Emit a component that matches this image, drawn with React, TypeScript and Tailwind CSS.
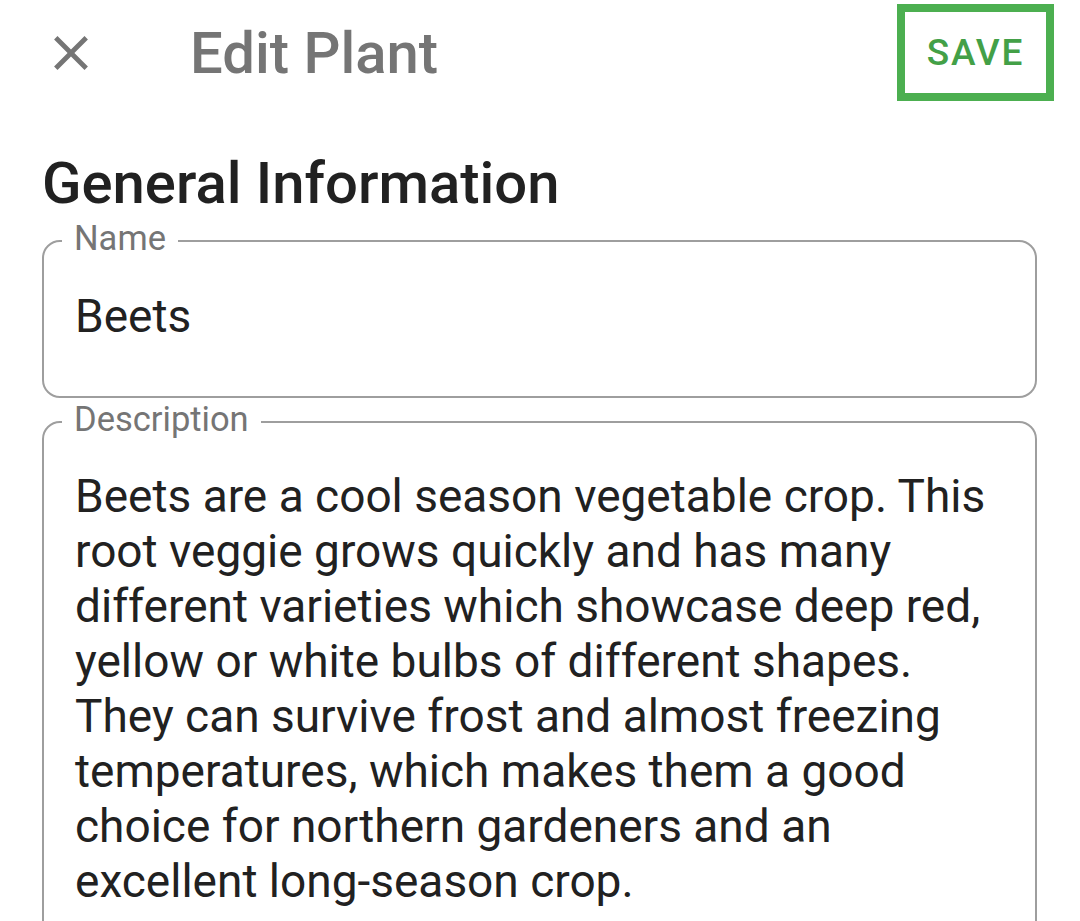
const DESCRIPTION =
  'Beets are a cool season vegetable crop. This root veggie grows quickly and has many different varieties which showcase deep red, yellow or white bulbs of different shapes. They can survive frost and almost freezing temperatures, which makes them a good choice for northern gardeners and an excellent long-season crop.';

function OutlinedField({ label, children, className }: { label: string; children: React.ReactNode; className?: string }) {
  return (
    <div className={`relative border-2 border-[#9e9e9e] rounded-[18px] ${className ?? ''}`}>
      <span className="absolute left-[18px] -top-[22px] px-[12px] bg-white text-[34.5px] leading-[36px] text-[#757575]">
        {label}
      </span>
      {children}
    </div>
  );
}

export default function App() {
  return (
    <div className="w-[1080px] h-[921px] overflow-hidden bg-white font-['Roboto',sans-serif]">
      {/* Toolbar */}
      <div className="flex items-center h-[105px] pl-[42px] pr-[26px]">
        <button className="w-[58px] h-[58px] flex items-center justify-center text-[#757575]">
          <svg viewBox="0 0 24 24" className="w-[58px] h-[58px]" fill="currentColor">
            <path d="M19 6.41L17.59 5 12 10.59 6.41 5 5 6.41 10.59 12 5 17.59 6.41 19 12 13.41 17.59 19 19 17.59 13.41 12z" />
          </svg>
        </button>
        <h1 className="ml-[90px] text-[58px] font-medium text-[#757575] leading-none">Edit Plant</h1>
        <button className="ml-auto w-[157px] h-[97px] border-[8px] border-[#4caf50] flex items-center justify-center text-[37px] font-medium text-[#43a047] tracking-[1.8px]">
          SAVE
        </button>
      </div>

      <div className="pl-[42px] pr-[43px]">
        <h2 className="mt-[49px] text-[58px] font-medium text-[#212121] leading-none">General Information</h2>

        <OutlinedField label="Name" className="mt-[28px]">
          <div className="pl-[31px] pt-[47px] pb-[52px] text-[46px] leading-[55px] text-[#212121]">Beets</div>
        </OutlinedField>

        <OutlinedField label="Description" className="mt-[23px]">
          <p className="pl-[31px] pr-[30px] pt-[46px] pb-[40px] text-[46px] leading-[55px] text-[#212121]">
            {DESCRIPTION}
          </p>
        </OutlinedField>
      </div>
    </div>
  );
}
